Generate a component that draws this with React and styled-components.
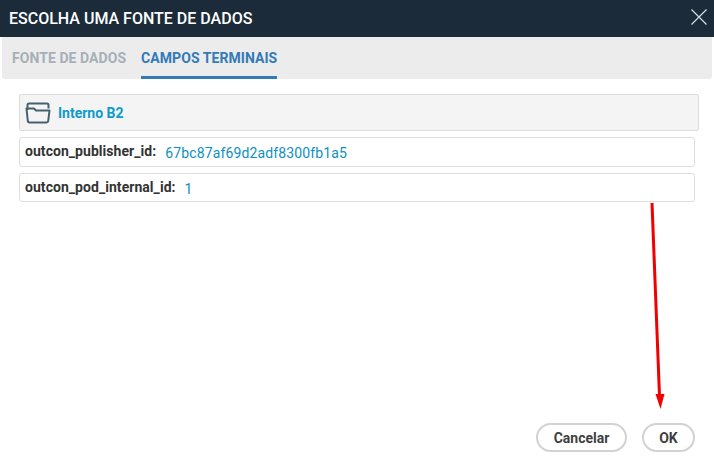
import React from "react";
import styled, { createGlobalStyle } from "styled-components";

const GlobalStyle = createGlobalStyle`
  html, body {
    margin: 0;
    padding: 0;
    background: #fff;
    font-family: Roboto, "Liberation Sans", sans-serif;
  }
`;

const Dialog = styled.div`
  position: relative;
  width: 714px;
  height: 462px;
  display: flex;
  flex-direction: column;
  overflow: hidden;
  background: #fff;
`;

const Header = styled.div`
  height: 37px;
  flex: none;
  display: flex;
  align-items: center;
  justify-content: space-between;
  padding: 0 7px 0 9px;
  background: #1c2b3a;
`;

const Title = styled.h1`
  margin: 0;
  font-size: 16px;
  font-weight: 500;
  color: #fff;
`;

const CloseIcon = styled.svg`
  width: 16px;
  height: 16px;
  display: block;
  margin-bottom: 3px;
`;

const Tabs = styled.div`
  height: 42px;
  flex: none;
  display: flex;
  gap: 15px;
  margin: 0 2px;
  padding: 0 10px;
  background: #ececec;
  border-radius: 0 0 3px 3px;
`;

const Tab = styled.div`
  display: flex;
  align-items: center;
  font-size: 14px;
  font-weight: 700;
  letter-spacing: 0.06px;
  box-sizing: border-box;
  padding-top: 3px;
  color: ${(p) => (p.$active ? "#337ab7" : "#a6b0b8")};
  border-bottom: 3px solid ${(p) => (p.$active ? "#337ab7" : "transparent")};
`;

const Content = styled.div`
  flex: 1;
  display: flex;
  flex-direction: column;
  padding: 15px 15px 0 19px;
`;

const SourceBox = styled.div`
  height: 37px;
  box-sizing: border-box;
  display: flex;
  align-items: center;
  gap: 7px;
  padding: 0 5px;
  background: #f4f4f4;
  border: 1px solid #dcdcdc;
  border-radius: 2px;
`;

const SourceName = styled.span`
  font-size: 14px;
  font-weight: 700;
  color: #0d9bcb;
`;

const FieldRow = styled.div`
  width: 676px;
  height: ${(p) => p.$h}px;
  box-sizing: border-box;
  display: flex;
  align-items: center;
  margin-top: 6px;
  padding: 0 5px 2px;
  border: 1px solid #dedede;
  border-radius: 3px;
  font-size: 14px;
`;

const FieldName = styled.span`
  font-weight: 700;
  letter-spacing: 0.05px;
  color: #333;
`;

const FieldValue = styled.span`
  margin-left: 9px;
  padding-top: 4px;
  color: #0d8fc2;
  letter-spacing: 0.13px;
`;

const Footer = styled.div`
  display: flex;
  justify-content: flex-end;
  gap: 15px;
  padding: 0 19px 10px;
`;

const Button = styled.button`
  width: ${(p) => p.$w}px;
  height: 29px;
  padding: 0;
  background: #fff;
  border: 2px solid #d2d2d2;
  border-radius: 15px;
  font-family: inherit;
  font-size: 14px;
  font-weight: 700;
  color: #3f3f3f;
`;

const ArrowOverlay = styled.svg`
  position: absolute;
  left: 640px;
  top: 200px;
  width: 32px;
  height: 212px;
`;

export default function App() {
  return (
    <Dialog>
      <GlobalStyle />
      <Header>
        <Title>ESCOLHA UMA FONTE DE DADOS</Title>
        <CloseIcon viewBox="0 0 16 16">
          <path d="M0.5 0.5 L15.5 15.5 M15.5 0.5 L0.5 15.5" stroke="#d5dee4" strokeWidth="1.2" fill="none" />
        </CloseIcon>
      </Header>
      <Tabs>
        <Tab>FONTE DE DADOS</Tab>
        <Tab $active>CAMPOS TERMINAIS</Tab>
      </Tabs>
      <Content>
        <SourceBox>
          <svg width="26" height="22" viewBox="0 0 26 22" fill="none" stroke="#46606f" strokeWidth="2" strokeLinejoin="round">
            <path d="M2.5 8 V3 Q2.5 1.5 4 1.5 H22 Q23.5 1.5 23.5 3 V6.5" />
            <path d="M1.5 6.5 H9 L11 8.5 H24.5 L23.2 19 Q23 20.5 21.5 20.5 H4.5 Q3 20.5 2.8 19 Z" />
          </svg>
          <SourceName>Interno B2</SourceName>
        </SourceBox>
        <FieldRow $h={30}>
          <FieldName>outcon_publisher_id:</FieldName>
          <FieldValue>67bc87af69d2adf8300fb1a5</FieldValue>
        </FieldRow>
        <FieldRow $h={29}>
          <FieldName>outcon_pod_internal_id:</FieldName>
          <FieldValue>1</FieldValue>
        </FieldRow>
      </Content>
      <Footer>
        <Button $w={91}>Cancelar</Button>
        <Button $w={53}>OK</Button>
      </Footer>
      <ArrowOverlay viewBox="0 0 32 212">
        <path d="M12 3 L19.5 196" stroke="#f00000" strokeWidth="3" fill="none" />
        <path d="M15.5 194 H24.5 L20.5 209 Z" fill="#f00000" />
      </ArrowOverlay>
    </Dialog>
  );
}
